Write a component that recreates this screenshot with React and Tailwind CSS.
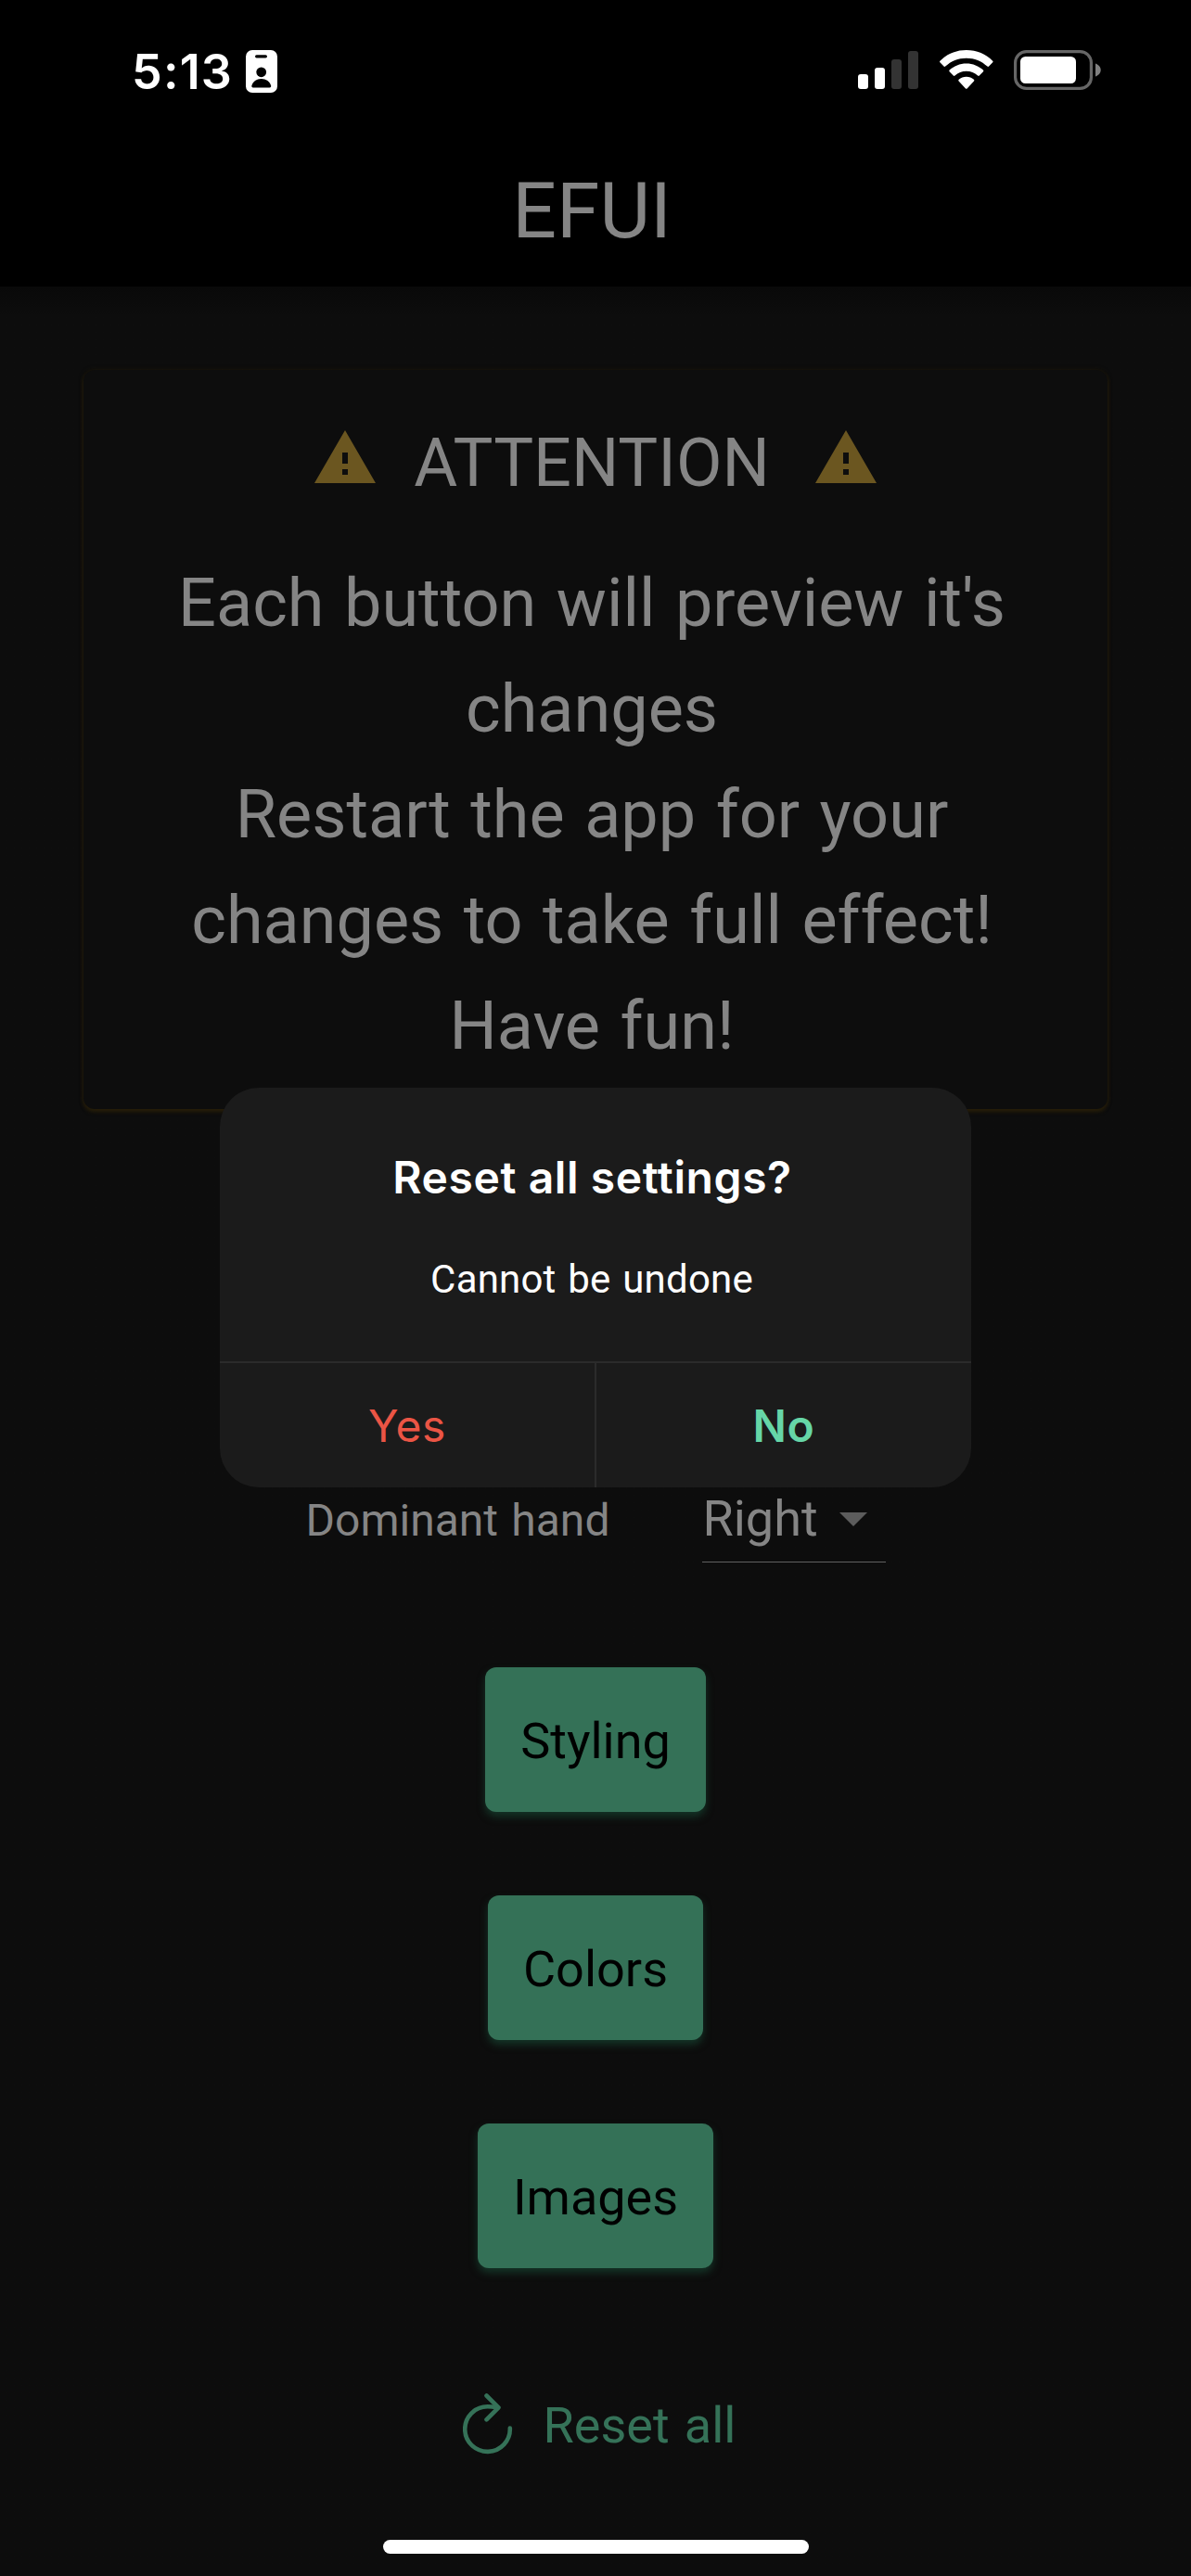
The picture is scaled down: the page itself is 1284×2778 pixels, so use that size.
import React from "react";

const NOTICE_LINES = [
  "Each button will preview it's",
  "changes",
  "Restart the app for your",
  "changes to take full effect!",
  "Have fun!",
];

const SECTIONS = ["Styling", "Colors", "Images"];

function BadgeIcon() {
  return (
    <svg className="h-[46px] w-[34px]" viewBox="0 0 34 46">
      <rect width="34" height="46" rx="7" fill="#fff" />
      <rect x="10" y="5.2" width="13" height="3.2" rx="1.6" fill="#000" />
      <circle cx="16.7" cy="23.8" r="5.4" fill="#000" />
      <path d="M6.3 38.6C7.4 34 11.6 31 16.7 31s9.4 3 10.5 7.600c.2 1-.4 1.900-1.500 1.900H7.800c-1.100 0-1.700-.9-1.500-1.900z" fill="#000" />
    </svg>
  );
}

function SignalIcon() {
  return (
    <svg className="h-[44px] w-[66px]" viewBox="0 0 66 44">
      <rect x="0" y="25" width="11" height="16" rx="3" fill="#fff" />
      <rect x="18" y="18" width="11" height="23" rx="3" fill="#fff" />
      <rect x="36" y="9" width="11" height="32" rx="3" fill="#333" />
      <rect x="54" y="0" width="11" height="41" rx="3" fill="#333" />
    </svg>
  );
}

function WifiIcon() {
  return (
    <svg className="h-[43px] w-[58px]" viewBox="0 0 58 43" fill="#fff">
      <path d="M28.800 0C40 0 50 4.300 57.200 11.700c.5.500.5 1.100 0 1.600l-4.100 4.300c-.5.500-1.200.5-1.700 0C45.400 11.900 37.500 8.700 28.800 8.700S12.200 11.900 6.200 17.600c-.5.500-1.200.5-1.700 0L.4 13.300c-.5-.5-.5-1.100 0-1.600C7.600 4.300 17.600 0 28.800 0z" />
      <path d="M28.800 14.400c7 0 13.400 2.700 18.200 7.200.5.500.5 1.100 0 1.600l-4.200 4.300c-.5.500-1.100.5-1.700 0-3.300-3-7.600-4.800-12.300-4.800s-9 1.800-12.300 4.800c-.6.500-1.200.5-1.700 0l-4.200-4.300c-.5-.5-.5-1.100 0-1.600 4.800-4.500 11.200-7.200 18.200-7.200z" />
      <path d="M28.800 28.800c3 0 5.900 1.100 8.100 3 .6.500.6 1.100.1 1.600l-7.400 8c-.5.500-1.100.5-1.600 0l-7.400-8c-.5-.5-.5-1.100.1-1.600 2.200-1.900 5.100-3 8.100-3z" />
    </svg>
  );
}

function BatteryIcon() {
  return (
    <svg className="h-[43px] w-[94px]" viewBox="0 0 94 43">
      <rect x="1.600" y="1.600" width="81.800" height="39.800" rx="12" fill="none" stroke="#666" strokeWidth="3.200" />
      <rect x="7" y="7" width="60" height="29" rx="5.500" fill="#fff" />
      <path d="M88 14.500c3.400 1.200 5.700 3.800 5.700 7s-2.300 5.800-5.700 7z" fill="#808080" />
    </svg>
  );
}

function WarningIcon() {
  return (
    <svg className="size-[72px]" viewBox="0 0 24 24" fill="#6b5620">
      <path d="M1 21h22L12 2 1 21zm12-3h-2v-2h2v2zm0-4h-2v-4h2v4z" />
    </svg>
  );
}

function RefreshIcon() {
  return (
    <svg
      className="h-[66px] w-[54px]"
      viewBox="0 0 54 66"
      fill="none"
      stroke="#357258"
      strokeWidth="4.600"
      strokeLinecap="round"
      strokeLinejoin="round"
    >
      <path d="M50.800 37.500A24.300 24.300 0 1 1 26.500 14.300c3.500 0 6.500.3 10 1" />
      <path d="M25.500 2.500 38.500 15.300 25.500 28.300" />
    </svg>
  );
}

function StatusBar() {
  return (
    <div className="flex h-[146px] items-start justify-between pl-[142px] pr-[97px] pt-[54px]">
      <div className="flex items-start">
        <span className="-mt-[9px] w-[123px] font-[Inter,sans-serif] text-[52px] leading-[65px] font-semibold tracking-[1.200px] text-white">
          5:13
        </span>
        <BadgeIcon />
      </div>
      <div className="flex items-start">
        <div className="mt-px mr-[22px]">
          <SignalIcon />
        </div>
        <div className="mr-[22px]">
          <WifiIcon />
        </div>
        <BatteryIcon />
      </div>
    </div>
  );
}

function Notice() {
  return (
    <section className="h-[797px] w-full rounded-xl bg-[#0d0d0d] pt-[59px] shadow-[0_3px_4px_#271e09,0_0_5px_#1c170b]">
      <div className="flex h-[135px] items-start justify-center">
        <WarningIcon />
        <h2 className="-mt-[8px] w-[468px] pr-2 text-center text-[72px] leading-[100px]">ATTENTION</h2>
        <WarningIcon />
      </div>
      <p className="pt-px pr-2 text-center text-[72px] leading-[114px] [word-spacing:3.6px]">
        {NOTICE_LINES.map((line) => (
          <span key={line} className="block whitespace-nowrap">
            {line}
          </span>
        ))}
      </p>
    </section>
  );
}

function ResetDialog() {
  return (
    <div
      role="alertdialog"
      className="absolute top-[1173px] left-[237px] flex h-[431px] w-[810px] flex-col overflow-hidden rounded-[42px] bg-[#1b1b1b] text-center"
    >
      <div className="h-[295px] pr-[7px] pt-[65px]">
        <h3 className="font-[Inter,sans-serif] text-[48px] leading-[64px] font-semibold tracking-[0.6px] text-white">
          Reset all settings?
        </h3>
        <p className="mt-[48px] pr-px text-[42px] leading-[60px] tracking-[0.2px] text-white [word-spacing:2.1px]">
          Cannot be undone
        </p>
      </div>
      <div className="flex flex-1 border-t-2 border-[#2b2b2b] font-[Inter,sans-serif] text-[48px] leading-[64px] tracking-[0.6px]">
        <button className="flex-1 border-r-2 border-[#2b2b2b] pt-px text-[#eb5545]">Yes</button>
        <button className="flex-1 pt-px font-semibold text-[#66d6a7]">No</button>
      </div>
    </div>
  );
}

export default function App() {
  return (
    <div className="relative flex h-[2778px] w-[1284px] flex-col overflow-hidden bg-[#0d0d0d] font-[Roboto,sans-serif] text-[#858585]">
      <header className="h-[309px] bg-black">
        <StatusBar />
        <h1 className="mt-8 pr-2 text-center text-[84px] leading-[100px]">EFUI</h1>
      </header>

      <main className="flex flex-1 flex-col items-center bg-linear-to-b from-[#090909] to-[#0d0d0d] to-[32px] px-[90px] pt-[90px]">
        <Notice />

        <div className="mt-[410px] flex h-[79px] gap-[100px] pl-px">
          <span className="pt-[2px] text-[48px] leading-[64px] [word-spacing:2.4px]">Dominant hand</span>
          <div className="flex w-[198px] items-start justify-between border-b border-[#606060] text-[54px] leading-[64px]">
            <span>Right</span>
            <svg className="-mt-[5px] -mr-px size-[72px]" viewBox="0 0 24 24" fill="#5c5c5c">
              <path d="M7 10l5 5 5-5z" />
            </svg>
          </div>
        </div>

        <div className="mt-[113px] flex flex-col items-center gap-[90px]">
          {SECTIONS.map((label) => (
            <button
              key={label}
              className="h-[156px] rounded-xl bg-[#347157] px-[38px] pt-[3px] text-[54px] text-black shadow-[0_5px_9px_#143427]"
            >
              {label}
            </button>
          ))}
        </div>

        <button className="mt-[135px] flex gap-[33px] pl-[8px] text-[54px] leading-[66px] text-[#357258] [word-spacing:2.7px]">
          <RefreshIcon />
          <span className="pt-[2px]">Reset all</span>
        </button>
      </main>

      <ResetDialog />
      <div className="absolute bottom-[24px] left-[413px] h-[15px] w-[459px] rounded-full bg-white" />
    </div>
  );
}
